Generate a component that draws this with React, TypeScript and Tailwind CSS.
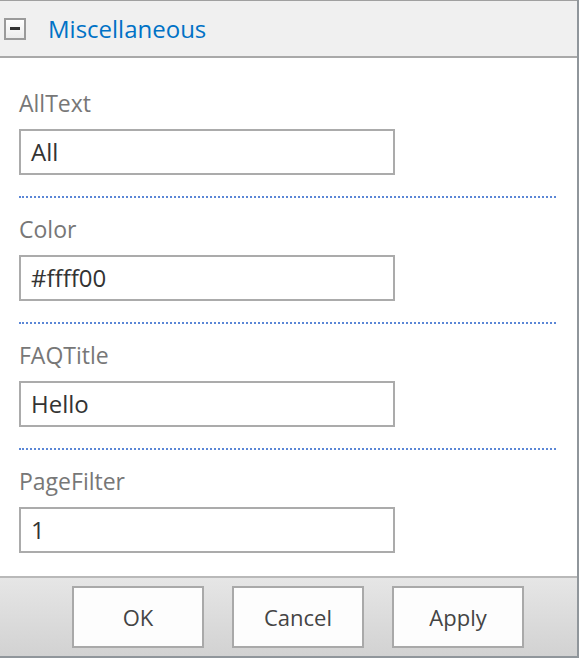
import React from "react";

const fields = [
  { label: "AllText", value: "All" },
  { label: "Color", value: "#ffff00" },
  { label: "FAQTitle", value: "Hello" },
  { label: "PageFilter", value: "1" },
];

export default function App() {
  return (
    <div
      className="w-[582px] h-[658px] bg-white flex"
      style={{ fontFamily: '"Open Sans", "Noto Sans", sans-serif' }}
    >
      <div className="w-[579px] h-[658px] flex flex-col border-r-2 border-[#90969b]">
        <div className="h-[58px] shrink-0 border-t border-[#a0a0a0] border-b-2 border-b-[#a9a9a9] bg-[#f0f0f0] flex items-center">
          <div className="ml-[4px] w-[22px] h-[22px] border-2 border-[#9a9a9a] bg-gradient-to-b from-white to-[#ececec] flex items-center justify-center">
            <div className="w-[10px] h-[3px] bg-[#333]" />
          </div>
          <span className="ml-[22px] text-[24px] leading-[30px] text-[#0072c6]">Miscellaneous</span>
        </div>
        <div className="flex-1 bg-white pt-[30px] pl-[19px] pr-[21px]">
          {fields.map((f, i) => (
            <div key={f.label}>
              <div className="text-[23px] leading-[30px] text-[#777777]">{f.label}</div>
              <div className="mt-[11px] w-[376px] h-[46px] border-2 border-[#ababab] flex items-center pl-[10px] text-[24px] text-[#333333]">
                {f.value}
              </div>
              {i < fields.length - 1 && (
                <div className="mt-[21px] mb-[16px] h-[2px] border-t-2 border-dotted border-[#5b87d6]" />
              )}
            </div>
          ))}
        </div>
        <div className="h-[82px] shrink-0 border-t-2 border-[#b9b9b9] border-b-2 border-b-[#90969b] bg-gradient-to-b from-[#e6e6e6] to-[#d2d2d2] flex items-center pl-[72px] gap-[28px]">
          {["OK", "Cancel", "Apply"].map((b) => (
            <div
              key={b}
              className="w-[132px] h-[62px] border-2 border-[#a9a9a9] bg-[#fdfdfd] flex items-center justify-center text-[22px] text-[#444444]"
            >
              {b}
            </div>
          ))}
        </div>
      </div>
    </div>
  );
}
